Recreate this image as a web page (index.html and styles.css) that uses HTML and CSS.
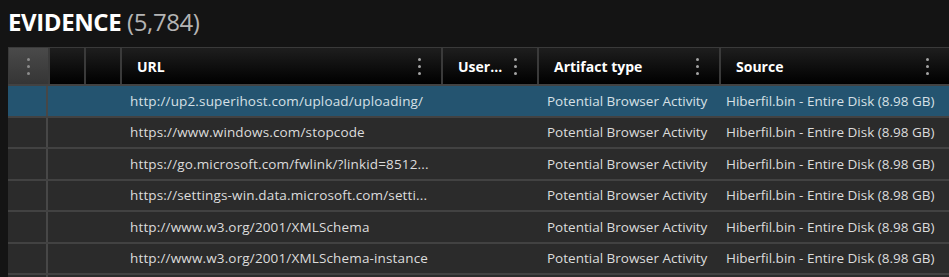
FILE: index.html
```
<!DOCTYPE html>
<html>
<head>
<meta charset="utf-8">
<link rel="stylesheet" href="styles.css">
</head>
<body>
<div class="page">
  <h1 class="title"><span class="title-main">EVIDENCE</span> <span class="title-count">(5,784)</span></h1>
  <div class="table">
    <div class="head">
      <div class="hcell hcell-menu"><span class="kebab"><i></i><i></i><i></i></span></div>
      <div class="hcell"></div>
      <div class="hcell"></div>
      <div class="hcell hcell-text"><span class="hlabel">URL</span><span class="kebab"><i></i><i></i><i></i></span></div>
      <div class="hcell hcell-text"><span class="hlabel">User...</span><span class="kebab"><i></i><i></i><i></i></span></div>
      <div class="hcell hcell-text"><span class="hlabel">Artifact type</span><span class="kebab"><i></i><i></i><i></i></span></div>
      <div class="hcell hcell-text"><span class="hlabel">Source</span><span class="kebab"><i></i><i></i><i></i></span></div>
    </div>
    <div class="row row-selected">
      <div class="cell cell-sel"></div>
      <div class="cell cell-spacer"></div>
      <div class="cell cell-url">http://up2.superihost.com/upload/uploading/</div>
      <div class="cell cell-user"></div>
      <div class="cell cell-type">Potential Browser Activity</div>
      <div class="cell cell-src">Hiberfil.bin - Entire Disk (8.98 GB)</div>
    </div>
    <div class="row">
      <div class="cell cell-sel"></div>
      <div class="cell cell-spacer"></div>
      <div class="cell cell-url">https://www.windows.com/stopcode</div>
      <div class="cell cell-user"></div>
      <div class="cell cell-type">Potential Browser Activity</div>
      <div class="cell cell-src">Hiberfil.bin - Entire Disk (8.98 GB)</div>
    </div>
    <div class="row">
      <div class="cell cell-sel"></div>
      <div class="cell cell-spacer"></div>
      <div class="cell cell-url">https://go.microsoft.com/fwlink/?linkid=8512...</div>
      <div class="cell cell-user"></div>
      <div class="cell cell-type">Potential Browser Activity</div>
      <div class="cell cell-src">Hiberfil.bin - Entire Disk (8.98 GB)</div>
    </div>
    <div class="row">
      <div class="cell cell-sel"></div>
      <div class="cell cell-spacer"></div>
      <div class="cell cell-url">https://settings-win.data.microsoft.com/setti...</div>
      <div class="cell cell-user"></div>
      <div class="cell cell-type">Potential Browser Activity</div>
      <div class="cell cell-src">Hiberfil.bin - Entire Disk (8.98 GB)</div>
    </div>
    <div class="row">
      <div class="cell cell-sel"></div>
      <div class="cell cell-spacer"></div>
      <div class="cell cell-url">http://www.w3.org/2001/XMLSchema</div>
      <div class="cell cell-user"></div>
      <div class="cell cell-type">Potential Browser Activity</div>
      <div class="cell cell-src">Hiberfil.bin - Entire Disk (8.98 GB)</div>
    </div>
    <div class="row">
      <div class="cell cell-sel"></div>
      <div class="cell cell-spacer"></div>
      <div class="cell cell-url">http://www.w3.org/2001/XMLSchema-instance</div>
      <div class="cell cell-user"></div>
      <div class="cell cell-type">Potential Browser Activity</div>
      <div class="cell cell-src">Hiberfil.bin - Entire Disk (8.98 GB)</div>
    </div>
    <div class="row">
      <div class="cell cell-sel"></div>
      <div class="cell cell-spacer"></div>
      <div class="cell cell-url"></div>
      <div class="cell cell-user"></div>
      <div class="cell cell-type"></div>
      <div class="cell cell-src"></div>
    </div>
  </div>
</div>
</body>
</html>
```
FILE: styles.css
```
html, body {
  margin: 0;
  padding: 0;
  background: #141414;
  overflow: hidden;
}
body {
  width: 949px;
  height: 277px;
  font-family: "Open Sans", "Noto Sans", "Liberation Sans", sans-serif;
}
.page {
  padding-left: 8px;
  height: 277px;
  overflow: hidden;
}
.title {
  margin: 0;
  height: 47px;
  box-sizing: border-box;
  padding-top: 6px;
  font-size: 24px;
  line-height: 32px;
  letter-spacing: -0.4px;
  white-space: nowrap;
}
.title-main {
  color: #ffffff;
  font-weight: 700;
}
.title-count {
  color: #b4b4b4;
  font-weight: 400;
}
.table {
  width: 941px;
  overflow: hidden;
}
.head {
  display: grid;
  grid-template-columns: 39px 34px 34px 319px 94px 180px 1fr;
  column-gap: 2px;
  height: 37px;
  box-sizing: border-box;
  border-top: 1px solid #3a3a3a;
  padding-left: 1px;
  background: #3a3a3a;
}
.hcell {
  background: linear-gradient(#1e1e1e, #000000);
  display: flex;
  align-items: center;
  min-width: 0;
}
.hcell-menu {
  background: linear-gradient(#4a4a4a, #353535);
  justify-content: center;
}
.hcell-text {
  justify-content: space-between;
  padding: 0 20px 0 15px;
}
.hlabel {
  color: #ffffff;
  font-weight: 700;
  font-size: 14px;
  white-space: nowrap;
}
.kebab {
  display: flex;
  flex-direction: column;
  gap: 3.5px;
  padding-top: 1px;
}
.kebab i {
  display: block;
  width: 3.5px;
  height: 3.5px;
  border-radius: 50%;
  background: #a4a4a4;
}
.hcell-menu .kebab i {
  background: #8c8c8c;
}
.row {
  display: grid;
  grid-template-columns: 38px 76px 321px 96px 182px 1fr;
  height: 31.5px;
  box-sizing: border-box;
  border-top: 2px solid #424242;
  background: #2b2b2b;
  color: #dcdcdc;
  font-size: 13.5px;
}
.row-selected {
  background: #245470;
  color: #d6e0e6;
}
.cell {
  display: flex;
  align-items: center;
  white-space: nowrap;
  overflow: hidden;
  min-width: 0;
}
.cell-spacer {
  border-left: 2px solid #474747;
}
.cell-url {
  padding-left: 8px;
  letter-spacing: 0.15px;
}
.cell-type {
  padding-left: 8px;
}
.cell-src {
  padding-left: 5px;
}
```
